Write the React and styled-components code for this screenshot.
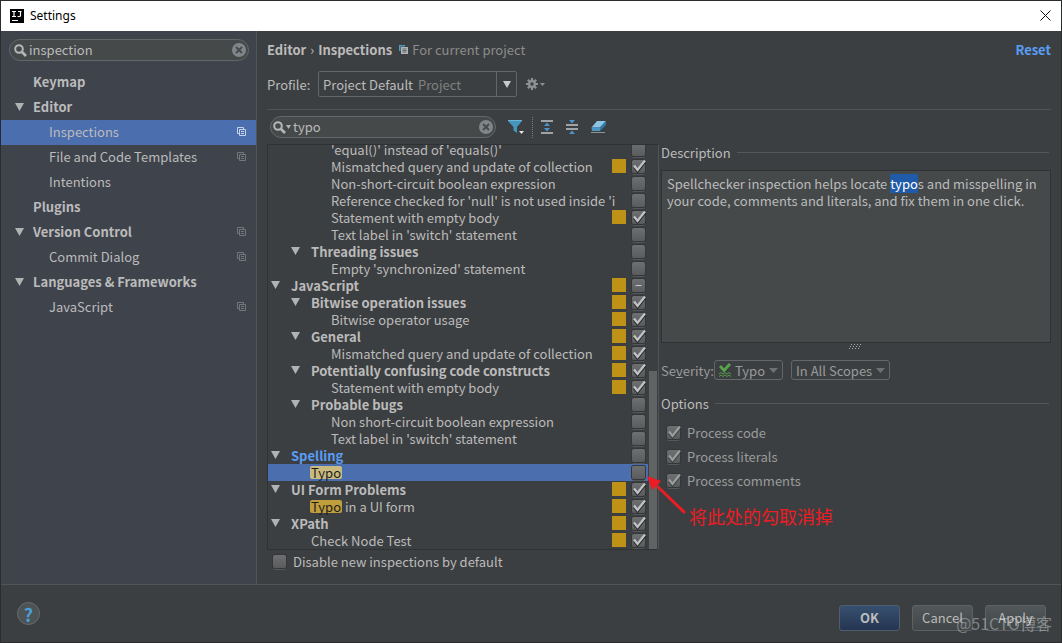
import React from 'react'
import styled, { createGlobalStyle, css } from 'styled-components';

const settingsTree = [
  { name: 'Keymap' },
  { name: 'Editor', open: true },
  { name: 'Inspections', leaf: true, project: true, selected: true },
  { name: 'File and Code Templates', leaf: true, project: true },
  { name: 'Intentions', leaf: true },
  { name: 'Plugins' },
  { name: 'Version Control', open: true, project: true },
  { name: 'Commit Dialog', leaf: true, project: true },
  { name: 'Languages & Frameworks', open: true },
  { name: 'JavaScript', leaf: true, project: true },
];

// state: on | off | mixed
const inspections = [
  { name: "'equal()' instead of 'equals()'", level: 2, state: 'off' },
  { name: 'Mismatched query and update of collection', level: 2, state: 'on', warn: true },
  { name: 'Non-short-circuit boolean expression', level: 2, state: 'off' },
  { name: "Reference checked for 'null' is not used inside 'i", level: 2, state: 'off' },
  { name: 'Statement with empty body', level: 2, state: 'on', warn: true },
  { name: "Text label in 'switch' statement", level: 2, state: 'off' },
  { name: 'Threading issues', level: 1, group: true, state: 'off' },
  { name: "Empty 'synchronized' statement", level: 2, state: 'off' },
  { name: 'JavaScript', level: 0, group: true, state: 'mixed', warn: true },
  { name: 'Bitwise operation issues', level: 1, group: true, state: 'on', warn: true },
  { name: 'Bitwise operator usage', level: 2, state: 'on', warn: true },
  { name: 'General', level: 1, group: true, state: 'on', warn: true },
  { name: 'Mismatched query and update of collection', level: 2, state: 'on', warn: true },
  { name: 'Potentially confusing code constructs', level: 1, group: true, state: 'on', warn: true },
  { name: 'Statement with empty body', level: 2, state: 'on', warn: true },
  { name: 'Probable bugs', level: 1, group: true, state: 'off' },
  { name: 'Non short-circuit boolean expression', level: 2, state: 'off' },
  { name: "Text label in 'switch' statement", level: 2, state: 'off' },
  { name: 'Spelling', level: 0, group: true, state: 'off', modified: true },
  { match: 'Typo', name: '', level: 1, state: 'off', selected: true },
  { name: 'UI Form Problems', level: 0, group: true, state: 'on', warn: true },
  { match: 'Typo', name: 'in a UI form', level: 1, state: 'on', warn: true },
  { name: 'XPath', level: 0, group: true, state: 'on', warn: true },
  { name: 'Check Node Test', level: 1, state: 'on', warn: true },
];

const options = ['Process code', 'Process literals', 'Process comments'];

function SearchIcon() {
  return (
    <svg width='13' height='13' viewBox='0 0 13 13' fill='none' stroke='#b4b6b7' aria-hidden='true'>
      <circle cx='5' cy='5' r='3.8' strokeWidth='2' />
      <path d='M8 8l4 4' strokeWidth='2.6' />
    </svg>
  )
}

function ClearIcon() {
  return (
    <svg width='14' height='14' viewBox='0 0 14 14' aria-hidden='true'>
      <circle cx='7' cy='7' r='7' fill='#80868a' />
      <path d='M4 4l6 6M10 4l-6 6' stroke='#45494a' strokeWidth='1.8' />
    </svg>
  )
}

function Triangle({ w = 9, h = 8, color = '#b0b2b3' }) {
  return (
    <svg width={w} height={h} viewBox='0 0 9 8' preserveAspectRatio='none' aria-hidden='true'>
      <path d='M0 0h9L4.500 8z' fill={color} />
    </svg>
  )
}

function CopyIcon({ color }) {
  return (
    <svg width='9' height='9' viewBox='0 0 9 9' fill='none' stroke={color} aria-hidden='true'>
      <path d='M2 6.500H.5v-6h6V2' />
      <path d='M2.500 2.500h6v6h-6zM4 4.500h3M4 6.500h3' />
    </svg>
  )
}

function ProjectIcon() {
  return (
    <svg width='9' height='9' viewBox='0 0 9 9' aria-hidden='true'>
      <path d='M0 0h6v1.500H1.500V6H0z' fill='#4d9cc0' />
      <path d='M2 2h7v7H2z' fill='#b0b4b6' />
      <path d='M3.500 4h4M3.500 5.500h4M3.500 7h4' stroke='#53585a' strokeWidth='.8' />
    </svg>
  )
}

function GearIcon() {
  return (
    <svg width='20' height='12' viewBox='0 0 20 12' aria-hidden='true'>
      <g stroke='#8e9193' strokeWidth='2.200'>
        <path d='M6 0v12M0 6h12M1.800 1.800l8.400 8.400M10.200 1.800l-8.400 8.400' />
      </g>
      <circle cx='6' cy='6' r='4' fill='#8e9193' />
      <circle cx='6' cy='6' r='1.700' fill='#3c3f41' />
      <path d='M14 5h5l-2.500 3z' fill='#8e9193' />
    </svg>
  )
}

function FilterIcon() {
  return (
    <svg width='16' height='16' viewBox='0 0 16 16' aria-hidden='true'>
      <path d='M0 1h14v1L9 8v6L5.500 11.500V8L0 2z' fill='#4596bd' />
      <path d='M0 1h14v1H0z' fill='#6fb3d3' />
      <path d='M11 12h5l-2.500 3z' fill='#e3e5e6' />
    </svg>
  )
}

function ExpandIcon() {
  return (
    <svg width='12' height='14' viewBox='0 0 12 14' aria-hidden='true'>
      <path d='M0 0h12v2H0zM0 12h12v2H0z' fill='#a0a3a5' />
      <path d='M6 2.500L9 6H3zM6 11.500L9 8H3z' fill='#4a94d0' />
    </svg>
  )
}

function CollapseIcon() {
  return (
    <svg width='12' height='14' viewBox='0 0 12 14' aria-hidden='true'>
      <path d='M0 4h12v2H0zM0 8h12v2H0z' fill='#a0a3a5' />
      <path d='M3 0h6L6 3.500zM3 14h6l-3-3.500z' fill='#4a94d0' />
    </svg>
  )
}

function EraserIcon() {
  return (
    <svg width='16' height='14' viewBox='0 0 16 14' aria-hidden='true'>
      <path d='M6 1h9L9 7.500H.5z' fill='#8cc4e6' />
      <path d='M.5 7.500H9V11H1z' fill='#4b97c4' />
      <path d='M15 1v4l-6 6V7.500z' fill='#2f79a8' />
      <path d='M0 12.500h14' stroke='#8f9496' />
    </svg>
  )
}

function SeverityIcon() {
  return (
    <svg width='12' height='14' viewBox='0 0 12 14' fill='none' stroke='#59a449' aria-hidden='true'>
      <path d='M1 3l4 4.500L11 1' strokeWidth='2.800' />
      <path d='M0 11l2-1.500 2 1.500 2-1.500L8 11l2-1.500 2 1.500M0 13.500L2 12l2 1.500L6 12l2 1.500L10 12l2 1.500' strokeWidth='.9' />
    </svg>
  )
}

function CheckBox({ state, ...rest }) {
  const ref = React.useRef(null)

  React.useEffect(() => {
    ref.current.indeterminate = state === 'mixed'
  }, [state])

  return (
    <CheckWrap>
      <CheckInput type='checkbox' ref={ref} defaultChecked={state === 'on'} {...rest} />
      <CheckMark viewBox='0 0 17 17' $dim={rest.disabled} aria-hidden='true'>
        {state === 'on' && <path d='M4 9l3.500 4.500L15.500 3.500' stroke='#232526' strokeWidth='2.200' />}
        {state === 'on' && <path d='M4 7.500L7.500 12 15 2.500' stroke='#c0c2c3' strokeWidth='2.300' />}
        {state === 'mixed' && <path d='M5.500 8.500h6' stroke='#c8cacb' />}
      </CheckMark>
    </CheckWrap>
  )
}

function InspectionRow({ item }) {
  const label = ((item.match || '') + ' ' + item.name).trim()
  return (
    <Row $level={item.level} $group={item.group} $selected={item.selected}>
      {item.group && <Triangle />}
      <RowText $group={item.group} $modified={item.modified}>
        {item.match && <Match $selected={item.selected}>{item.match}</Match>}
        {item.name}
      </RowText>
      {item.warn && <Warning />}
      <CheckBox state={item.state} aria-label={label} />
    </Row>
  )
}

export default function App() {
  return (
    <Dialog>
      <GlobalStyle />
      <TitleBar>
        <svg width='14' height='14' viewBox='0 0 14 14' aria-hidden='true'>
          <path d='M0 0h14v14H0z' fill='#000' />
          <path d='M2 2.500h4M4 2.500v5M2 7.500h4M8 2.500h3.500M10.500 2.500v4q0 1-1 1H7.500M2 11.500h6' stroke='#fff' strokeWidth='1.200' fill='none' />
        </svg>
        <Title>Settings</Title>
        <IconButton aria-label='Close'>
          <svg width='11' height='11' viewBox='0 0 11 11' stroke='#111' aria-hidden='true'>
            <path d='M.5.5l10 10M10.500.5l-10 10' />
          </svg>
        </IconButton>
      </TitleBar>

      <Body>
        <Sidebar>
          <SearchBox>
            <SearchIcon />
            <SearchInput aria-label='Search settings' defaultValue='inspection' />
            <IconButton aria-label='Clear search'><ClearIcon /></IconButton>
          </SearchBox>
          <Nav>
            {settingsTree.map(item => (
              <NavItem key={item.name} $leaf={item.leaf} $selected={item.selected}>
                {!item.leaf && <NavArrow>{item.open && <Triangle />}</NavArrow>}
                <NavText>{item.name}</NavText>
                {item.project && <CopyIcon color={item.selected ? '#c5d3ea' : '#72777c'} />}
              </NavItem>
            ))}
          </Nav>
        </Sidebar>

        <Main>
          <Header>
            <Crumb>Editor</Crumb>
            <span>›</span>
            <Crumb>Inspections</Crumb>
            <Scope><ProjectIcon />For current project</Scope>
            <Reset href='#reset'>Reset</Reset>
          </Header>

          <ProfileRow>
            <ProfileLabel htmlFor='profile'>Profile:</ProfileLabel>
            <ProfileBox>
              <BareSelect id='profile'><option>Project Default</option></BareSelect>
              <Hint>Project</Hint>
              <ProfileArrow><Triangle w={8} h={7} color='#c8cacb' /></ProfileArrow>
            </ProfileBox>
            <IconButton aria-label='Profile actions'><GearIcon /></IconButton>
          </ProfileRow>

          <Toolbar>
            <SearchBox $narrow>
              <SearchIcon />
              <Triangle w={5} h={4} />
              <SearchInput $indent aria-label='Search inspections' defaultValue='typo' />
              <IconButton aria-label='Clear filter'><ClearIcon /></IconButton>
            </SearchBox>
            <Tools>
              <IconButton aria-label='Filter'><FilterIcon /></IconButton>
              <Dots />
            </Tools>
            <Tools $wide>
              <IconButton aria-label='Expand all'><ExpandIcon /></IconButton>
              <IconButton aria-label='Collapse all'><CollapseIcon /></IconButton>
              <IconButton aria-label='Reset to empty'><EraserIcon /></IconButton>
            </Tools>
          </Toolbar>

          <Split>
            <TreePane>
              <Rows>
                {inspections.map((item, i) => <InspectionRow key={i} item={item} />)}
              </Rows>
              <ScrollTrack><ScrollThumb /></ScrollTrack>
            </TreePane>

            <Details>
              <Legend>Description</Legend>
              <Description>
                Spellchecker inspection helps locate <Found>typo</Found>s and misspelling in your code, comments and literals, and fix them in one click.
              </Description>
              <Grip viewBox='0 0 14 5' aria-hidden='true'>
                <path d='M2 .5h12M1 2.500h12M0 4.500h12' stroke='#a5a7a8' strokeDasharray='1 2' />
              </Grip>
              <SeverityRow>
                <label htmlFor='severity'>Se<u>v</u>erity:</label>
                <SmallBox>
                  <SeverityIcon />
                  <BareSelect id='severity' disabled><option>Typo</option></BareSelect>
                  <Triangle w={9} h={5} color='#6e7173' />
                </SmallBox>
                <SmallBox>
                  <BareSelect aria-label='Scope' disabled><option>In All Scopes</option></BareSelect>
                  <Triangle w={9} h={5} color='#6e7173' />
                </SmallBox>
              </SeverityRow>
              <Legend>Options</Legend>
              <OptionList>
                {options.map(o => (
                  <Option key={o}><CheckBox state='on' disabled />{o}</Option>
                ))}
              </OptionList>
              <Note>
                <svg width='40' height='38' viewBox='0 0 40 38' aria-hidden='true'>
                  <path d='M11 11l26 25' stroke='#ec1c24' strokeWidth='3' strokeLinecap='round' />
                  <path d='M0 0l14 5-4.500 5L5 14z' fill='#ec1c24' />
                </svg>
                <NoteText>将此处的勾取消掉</NoteText>
              </Note>
            </Details>
          </Split>

          <DisableRow>
            <CheckBox state='off' />
            Disable new inspections by default
          </DisableRow>
        </Main>
      </Body>

      <Footer>
        <HelpButton aria-label='Help'>?</HelpButton>
        <Button $primary>OK</Button>
        <Button>Cancel</Button>
        <Button>Apply</Button>
        <Watermark>@51CTO博客</Watermark>
      </Footer>
    </Dialog>
  )
}

const GlobalStyle = createGlobalStyle`
  * {
    box-sizing: border-box;
  }
  body {
    margin: 0;
    background: #3c3f41;
  }
  body, button, input, select {
    font-family: "Noto Sans CJK SC", "Noto Sans", sans-serif;
    font-size: 13px;
    line-height: 17px;
    color: #bbbbbb;
  }
  svg {
    flex: none;
    display: block;
  }
`;

const Dialog = styled.div`
  display: flex;
  flex-direction: column;
  height: 100vh;
  border: 1px solid #2a2c2d;
  background: #3c3f41;
  overflow: hidden;
`;

const TitleBar = styled.header`
  display: flex;
  align-items: center;
  height: 30px;
  flex: none;
  padding: 0 10px 1px 9px;
  background: #fff;
`;

const Title = styled.h1`
  flex: 1;
  margin: 0 0 0 6px;
  font: 400 12px "Noto Sans", sans-serif;
  color: #000;
`;

const IconButton = styled.button`
  display: flex;
  padding: 0;
  border: 0;
  background: none;
`;

const Body = styled.div`
  display: flex;
  flex: 1;
  min-height: 0;
`;

const Sidebar = styled.aside`
  flex: none;
  width: 256px;
  padding-top: 8px;
  background: #3f434c;
  border-right: 1px solid #515355;
`;

const SearchBox = styled.div`
  display: flex;
  align-items: center;
  gap: 2px;
  height: 22px;
  margin: 0 7px 0 8px;
  padding: 0 2px 0 4px;
  border: 1px solid #646769;
  border-radius: 11px;
  background: #45494a;
  ${p => p.$narrow && css`
    gap: 0;
    width: 226px;
    margin: 0 0 0 3px;
    padding-left: 2px;
  `}
`;

const SearchInput = styled.input`
  flex: 1;
  min-width: 0;
  padding: 0 0 1px ${p => (p.$indent ? 2 : 0)}px;
  border: 0;
  outline: 0;
  background: none;
`;

const Nav = styled.nav`
  margin-top: 9px;
`;

const NavText = styled.span`
  flex: 1;
  text-align: left;
`;

const NavArrow = styled.span`
  width: 18px;
`;

const NavItem = styled.button`
  display: flex;
  align-items: center;
  width: 100%;
  height: 25px;
  border: 0;
  padding: 0 10px 2px ${p => (p.$leaf ? 48 : 14)}px;
  background: ${p => (p.$selected ? '#4b6eaf' : 'none')};
  font-weight: ${p => (p.$leaf ? 400 : 700)};
`;

const Main = styled.main`
  display: flex;
  flex-direction: column;
  flex: 1;
  min-width: 0;
  padding: 8px 10px 9px;
`;

const Header = styled.div`
  display: flex;
  align-items: center;
  gap: 4px;
  height: 20px;
`;

const Crumb = styled.b`
  font-weight: 700;
`;

const Scope = styled.span`
  display: flex;
  align-items: center;
  gap: 4px;
  margin-left: 3px;
  color: #8c8c8c;
`;

const Reset = styled.a`
  margin-left: auto;
  color: #589df6;
  font-weight: 700;
  text-decoration: none;
`;

const ProfileRow = styled.div`
  display: flex;
  align-items: center;
  margin-top: 12px;
  padding-bottom: 12px;
  border-bottom: 1px solid #515355;
`;

const ProfileLabel = styled.label`
  width: 51px;
`;

const ProfileBox = styled.div`
  display: flex;
  align-items: center;
  width: 199px;
  height: 26px;
  margin-right: 9px;
  padding-left: 4px;
  border: 1px solid #646769;
  border-radius: 2px;
`;

const BareSelect = styled.select`
  appearance: none;
  field-sizing: content;
  padding: 0;
  border: 0;
  outline: 0;
  background: none;
  opacity: 1;
  &:disabled {
    color: #999b9c;
  }
`;

const Hint = styled.span`
  flex: 1;
  margin-left: 5px;
  color: #808080;
`;

const ProfileArrow = styled.span`
  display: flex;
  align-items: center;
  justify-content: center;
  width: 20px;
  align-self: stretch;
  border-left: 1px solid #646769;
`;

const Toolbar = styled.div`
  display: flex;
  align-items: center;
  gap: 12px;
  height: 34px;
  flex: none;
`;

const Tools = styled.div`
  display: flex;
  align-items: center;
  gap: ${p => (p.$wide ? 13 : 8)}px;
  ${p => p.$wide && css`
    margin-left: -4px;
  `}
`;

const Dots = styled.span`
  height: 21px;
  border-left: 1px dotted #77797b;
`;

const Split = styled.div`
  display: grid;
  grid-template-columns: minmax(0, 1fr) minmax(0, 1fr);
  flex: 1;
  min-height: 0;
`;

const TreePane = styled.div`
  display: flex;
  min-height: 0;
  border: 1px solid #2f3133;
  border-right-color: #515355;
`;

const Rows = styled.ul`
  display: flex;
  flex-direction: column;
  justify-content: flex-end;
  flex: 1;
  min-width: 0;
  margin: 0;
  padding: 0;
  list-style: none;
  overflow: hidden;
`;

const Row = styled.li`
  display: flex;
  align-items: center;
  gap: 6px;
  flex: none;
  height: 17px;
  padding-right: 3px;
  padding-bottom: 1px;
  padding-left: ${p => p.$level * 20 + (p.$group ? 3 : 23)}px;
  background: ${p => (p.$selected ? '#4b6eaf' : 'none')};
`;

const RowText = styled.span`
  flex: 1;
  min-width: 0;
  white-space: nowrap;
  ${p => p.$group && css`
    padding-left: 5px;
    font-weight: 700;
  `}
  ${p => p.$modified && css`
    color: #589df6;
  `}
`;

const Match = styled.mark`
  display: inline-block;
  height: 13px;
  margin: 0 3px 0 -1px;
  padding: 0 1px;
  border-radius: 2px;
  line-height: 13px;
  color: #1c1c1c;
  background: ${p => (p.$selected ? '#c9bb80' : '#c09e3c')};
`;

const Warning = styled.span`
  width: 14px;
  height: 14px;
  background: #be9117;
`;

const CheckWrap = styled.span`
  display: grid;
  grid-template: 13px / 13px;
  flex: none;
`;

const CheckInput = styled.input`
  grid-area: 1 / 1;
  appearance: none;
  width: 13px;
  height: 13px;
  margin: 0;
  border-radius: 2px;
  background: linear-gradient(#6e6f70, #5a5b5c);
  box-shadow: 0 0 0 1px #343638, 0 2px 0 #55585a;
`;

const CheckMark = styled.svg`
  grid-area: 1 / 1;
  place-self: center;
  width: 17px;
  height: 17px;
  margin: -2px;
  fill: none;
  pointer-events: none;
  z-index: 1;
  opacity: ${p => (p.$dim ? 0.6 : 1)};
`;

const ScrollTrack = styled.div`
  display: flex;
  align-items: flex-end;
  width: 10px;
  padding: 0 1px;
`;

const ScrollThumb = styled.div`
  width: 8px;
  height: 44%;
  background: #5f6364;
`;

const Details = styled.section`
  position: relative;
  display: flex;
  flex-direction: column;
  padding: 0 0 58px 2px;
`;

const Legend = styled.h2`
  display: flex;
  align-items: center;
  gap: 6px;
  height: 20px;
  margin: 0;
  padding: 0 2px 3px 0;
  font-size: 13px;
  font-weight: 400;
  &::after {
    content: '';
    flex: 1;
    border-top: 1px solid #555759;
  }
`;

const Description = styled.div`
  flex: 1;
  margin-top: 6px;
  padding: 4px 5px;
  border: 1px solid #2f3133;
  background: #45494a;
`;

const Found = styled.span`
  color: #fff;
  background: #1f5ba8;
`;

const Grip = styled.svg`
  width: 14px;
  height: 5px;
  margin: 1px auto 0;
`;

const SeverityRow = styled.div`
  display: flex;
  align-items: center;
  height: 20px;
  margin: 11px 0 15px;
  gap: 8px;
  color: #999b9c;
  label {
    width: 45px;
    white-space: nowrap;
  }
`;

const SmallBox = styled.div`
  display: flex;
  align-items: center;
  gap: 4px;
  height: 20px;
  padding: 0 4px;
  border: 1px solid #646769;
  border-radius: 3px;
`;

const OptionList = styled.div`
  display: flex;
  flex-direction: column;
  margin-top: 5px;
`;

const Option = styled.label`
  display: flex;
  align-items: center;
  gap: 7px;
  height: 24px;
  padding-left: 6px;
  color: #999b9c;
`;

const DisableRow = styled.label`
  display: flex;
  align-items: center;
  gap: 7px;
  flex: none;
  height: 25px;
  padding: 0 0 2px 6px;
`;

/* pointer drawn over the tree, towards the unchecked box */
const Note = styled.div`
  position: absolute;
  left: -12px;
  bottom: 20px;
  display: flex;
  align-items: flex-end;
  height: 54px;
  pointer-events: none;
  svg {
    align-self: flex-start;
  }
`;

const NoteText = styled.span`
  margin-left: 2px;
  padding-bottom: 1px;
  font-size: 18px;
  line-height: 26px;
  color: #ec1c24;
  white-space: nowrap;
`;

const Footer = styled.footer`
  position: relative;
  display: flex;
  align-items: center;
  gap: 12px;
  flex: none;
  height: 58px;
  padding: 8px 15px 0 16px;
  border-top: 1px solid #515355;
`;

const HelpButton = styled.button`
  width: 23px;
  height: 23px;
  margin-right: auto;
  margin-bottom: 8px;
  padding: 0;
  border: 1px solid #686c6e;
  border-radius: 50%;
  background: #4d5254;
  font-size: 18px;
  line-height: 20px;
  font-weight: 700;
  color: #4a9fd4;
`;

const Button = styled.button`
  width: 61px;
  height: 26px;
  padding: 0;
  border: 1px solid ${p => (p.$primary ? '#4f5d6e' : '#5e6264')};
  border-radius: 3px;
  background: ${p => (p.$primary ? 'linear-gradient(#37506f, #253551)' : 'linear-gradient(#52585a, #414648)')};
  font-weight: ${p => (p.$primary ? 700 : 400)};
`;

const Watermark = styled.span`
  position: absolute;
  right: 9px;
  bottom: 8px;
  font-size: 16px;
  line-height: 22px;
  color: rgba(255, 255, 255, 0.35);
  pointer-events: none;
`;
